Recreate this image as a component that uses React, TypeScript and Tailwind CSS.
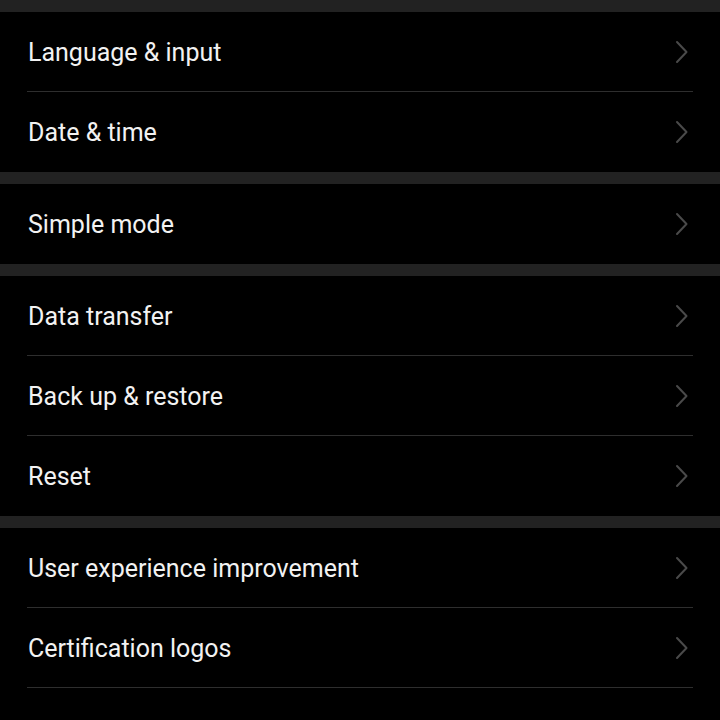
const sections: string[][] = [
  ['Language & input', 'Date & time'],
  ['Simple mode'],
  ['Data transfer', 'Back up & restore', 'Reset'],
  ['User experience improvement', 'Certification logos'],
]

function Chevron() {
  return (
    <svg width="14" height="24" viewBox="0 0 14 24" fill="none" className="shrink-0">
      <path d="M2 2 L11.5 12 L2 22" stroke="#4a4a4a" strokeWidth="2" strokeLinecap="round" strokeLinejoin="round" />
    </svg>
  )
}

export default function App() {
  return (
    <div
      className="w-[720px] h-[720px] overflow-hidden bg-black"
      style={{ fontFamily: 'Roboto, "Noto Sans", sans-serif' }}
    >
      {sections.map((items, si) => (
        <div key={si}>
          {/* gray section gap */}
          <div className="h-[12px] bg-[#222222]" />
          {items.map((label, i) => {
            const isLast = i === items.length - 1
            const divider = !isLast || si === sections.length - 1
            return (
              <div key={label} className="pl-[27px] pr-[27px]">
                <div
                  className={
                    'h-[80px] flex items-center justify-between ' +
                    (divider ? 'border-b border-[#2e2e2e]' : '')
                  }
                >
                  <span className="text-[25px] text-[#f2f2f2] pl-px pt-[2px]">{label}</span>
                  <div className="pr-[4px]">
                    <Chevron />
                  </div>
                </div>
              </div>
            )
          })}
        </div>
      ))}
    </div>
  )
}
